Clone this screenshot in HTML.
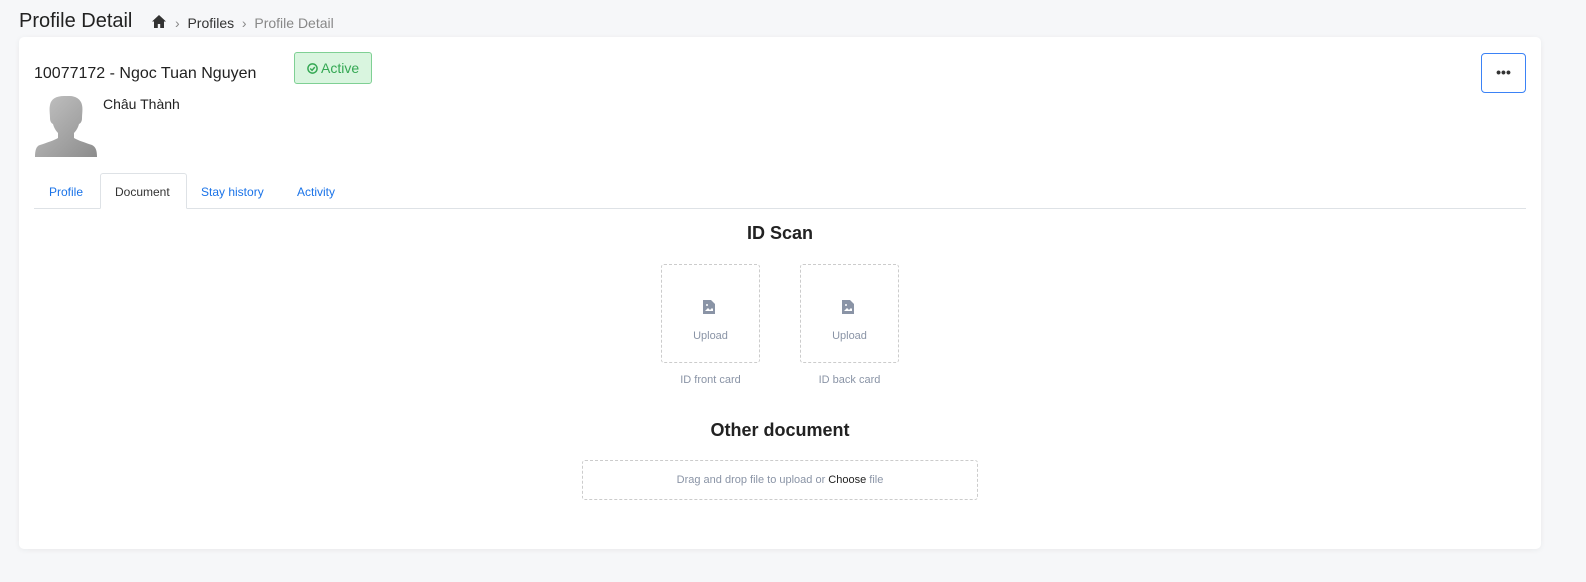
<!DOCTYPE html>
<html><head><meta charset="utf-8"><style>
*{box-sizing:border-box;margin:0;padding:0}
body{width:1586px;height:582px;background:#f6f7f9;font-family:"Liberation Sans",sans-serif;position:relative;overflow:hidden;color:#212529}
.abs{position:absolute}
.card{position:absolute;left:19px;top:37px;width:1522px;height:512px;background:#fff;border-radius:5px;box-shadow:0 1px 6px rgba(0,0,0,.06)}
.box{position:absolute;border:1px dashed #ccc;border-radius:3px}
</style></head><body>
<div class="abs" style="left:19px;top:10px;font-size:20px;color:#222">Profile Detail</div>
<svg class="abs" style="left:152px;top:15px" width="14" height="13" viewBox="0 0 14 13"><path d="M7 0L0 6.5h2V13h3.8V9h2.4v4H12V6.5h2z" fill="#333"/></svg>
<div class="abs" style="left:175px;top:15px;font-size:14px;color:#333"><span style="color:#888">›</span>&nbsp; Profiles &nbsp;<span style="color:#888">›</span>&nbsp; <span style="color:#888">Profile Detail</span></div>
<div class="card">
 <div class="abs" style="left:15px;top:28px;font-size:16px;color:#222">10077172 - Ngoc Tuan Nguyen</div>
 <div class="abs" style="left:275px;top:15px;width:78px;height:32px;background:#d9f5df;border:1px solid #7fd094;border-radius:3px;color:#34a853;font-size:14px;line-height:30px;text-align:center">
  <svg width="11" height="11" viewBox="0 0 12 12" style="vertical-align:-1px"><circle cx="6" cy="6" r="5" fill="none" stroke="#34a853" stroke-width="1.6"/><path d="M3.5 6l2 2 3-3.5" fill="none" stroke="#34a853" stroke-width="1.6"/></svg> Active</div>
 <div class="abs" style="left:1462px;top:16px;width:45px;height:40px;border:1px solid #3b82f6;border-radius:4px;text-align:center;line-height:36px;font-size:14px;color:#333;font-weight:bold">•••</div>
 <svg class="abs" style="left:16px;top:59px" width="62" height="61" viewBox="0 0 62 61"><defs><linearGradient id="g" x1="0" y1="0" x2="1" y2="1"><stop offset="0" stop-color="#c4c4c4"/><stop offset="1" stop-color="#8c8c8c"/></linearGradient></defs><path d="M29 0c-8 0-13 3-14 9-1 4 0 9 0 13 0 3 1 5 3 6 1 4 3 7 5 9v5c-3 2-12 5-18 7C1 50 0 55 0 61h62c0-6-1-10-5-12-6-2-15-5-18-7v-5c2-2 4-5 5-9 2-1 3-3 3-6 0-4 1-9 0-13C46 3 40 0 35 0z" fill="url(#g)"/></svg>
 <div class="abs" style="left:84px;top:59px;font-size:14px;color:#222">Châu Thành</div>
 <div class="abs" style="left:15px;top:171px;width:1492px;height:1px;background:#dee2e6"></div>
 <div class="abs" style="left:81px;top:136px;width:87px;height:36px;background:#fff;border:1px solid #dee2e6;border-bottom-color:#fff;border-radius:3px 3px 0 0"></div>
 <div class="abs" style="left:30px;top:148px;font-size:12px;color:#1a73e8">Profile</div>
 <div class="abs" style="left:96px;top:148px;font-size:12px;color:#333">Document</div>
 <div class="abs" style="left:182px;top:148px;font-size:12px;color:#1a73e8">Stay history</div>
 <div class="abs" style="left:278px;top:148px;font-size:12px;color:#1a73e8">Activity</div>
 <div class="abs" style="left:0;width:1522px;top:186px;text-align:center;font-size:18px;font-weight:bold;color:#222">ID Scan</div>
 <div class="box" style="left:642px;top:227px;width:99px;height:99px"></div>
 <div class="box" style="left:781px;top:227px;width:99px;height:99px"></div>
 <svg class="abs" style="left:684px;top:263px" width="12" height="14" viewBox="0 0 12 14"><path d="M0 0h8l4 4v10H0z" fill="#8a94a6"/><path d="M2 11l3-3 2 2 2-2 1 1v2H2z" fill="#fff"/><circle cx="4" cy="5" r="1" fill="#fff"/></svg>
 <svg class="abs" style="left:823px;top:263px" width="12" height="14" viewBox="0 0 12 14"><path d="M0 0h8l4 4v10H0z" fill="#8a94a6"/><path d="M2 11l3-3 2 2 2-2 1 1v2H2z" fill="#fff"/><circle cx="4" cy="5" r="1" fill="#fff"/></svg>
 <div class="abs" style="left:642px;width:99px;top:293px;text-align:center;font-size:11px;color:#8a94a6">Upload</div>
 <div class="abs" style="left:781px;width:99px;top:293px;text-align:center;font-size:11px;color:#8a94a6">Upload</div>
 <div class="abs" style="left:632px;width:119px;top:337px;text-align:center;font-size:11px;color:#8a94a6">ID front card</div>
 <div class="abs" style="left:771px;width:119px;top:337px;text-align:center;font-size:11px;color:#8a94a6">ID back card</div>
 <div class="abs" style="left:0;width:1522px;top:383px;text-align:center;font-size:18px;font-weight:bold;color:#222">Other document</div>
 <div class="box" style="left:563px;top:423px;width:396px;height:40px;text-align:center;line-height:38px;font-size:11px;color:#8a94a6">Drag and drop file to upload or <span style="color:#222">Choose</span> file</div>
</div>
</body></html>
